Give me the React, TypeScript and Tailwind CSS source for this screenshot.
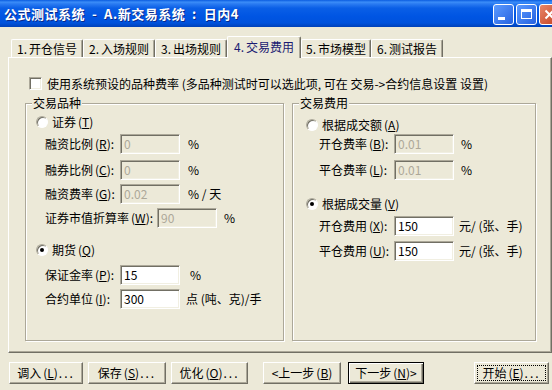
import React from "react";

function U({ c }: { c: string }) {
  return (
    <span className="ml-[2px]">
      (<span className="underline underline-offset-[1px] decoration-1">{c}</span>)
    </span>
  );
}

function Dots() {
  return <span className="tracking-[2px] ml-[1px]">...</span>;
}

function Field({ value, disabled }: { value: string; disabled?: boolean }) {
  return (
    <div
      className={
        "w-[60px] h-[20px] border border-t-[#ACA899] border-l-[#ACA899] border-r-white border-b-white shadow-[inset_1px_1px_0_#716F64,inset_-1px_-1px_0_#F1EFE2] pl-[3px] pt-[1px] text-[12px] leading-[15px] " +
        (disabled ? "bg-[#ECE9D8] text-[#ACA899]" : "bg-white text-black")
      }
    >
      {value}
    </div>
  );
}

function Radio({ checked }: { checked?: boolean }) {
  return (
    <div className="w-[12px] h-[12px] shrink-0 rounded-full border border-t-[#ACA899] border-l-[#ACA899] border-r-white border-b-white bg-white shadow-[inset_1px_1px_0_#716F64] flex items-center justify-center">
      {checked && <div className="w-[4px] h-[4px] rounded-full bg-black" />}
    </div>
  );
}

function Btn({ children, cls, kind }: { children: React.ReactNode; cls: string; kind?: "default" | "focus" }) {
  if (kind === "default") {
    return (
      <div className={"h-[22px] border border-black shadow-[inset_1px_1px_0_#fff,inset_-1px_-1px_0_#716F64,inset_-2px_-2px_0_#ACA899] flex items-center justify-center " + cls}>
        {children}
      </div>
    );
  }
  if (kind === "focus") {
    return (
      <div className={"h-[22px] border border-t-white border-l-white border-r-[#716F64] border-b-[#716F64] shadow-[inset_-1px_-1px_0_#ACA899] p-[2px] " + cls}>
        <div className="w-full h-full border border-dotted border-black flex items-center justify-center">{children}</div>
      </div>
    );
  }
  return (
    <div className={"h-[22px] border border-t-white border-l-white border-r-[#716F64] border-b-[#716F64] shadow-[inset_-1px_-1px_0_#ACA899] flex items-center justify-center " + cls}>
      {children}
    </div>
  );
}

function Tab({ num, label, cls, selected }: { num: string; label: string; cls: string; selected?: boolean }) {
  return (
    <div
      className={
        "border-l border-t border-l-white border-t-white border-r border-r-[#716F64] shadow-[inset_-1px_0_0_#ACA899] rounded-t-[2px] bg-[#ECE9D8] flex items-center justify-center " +
        (selected ? "relative z-10 h-[22px] -mb-px text-[#1B1B72] pb-[2px] " : "h-[18px] text-black ") +
        cls
      }
    >
      <span className="mr-[2px]">{num}.</span>
      {label}
    </div>
  );
}

export default function App() {
  return (
    <div className="w-[552px] h-[390px] overflow-hidden bg-[#ECE9D8] text-[12px] leading-[14px] text-black font-['Noto_Sans_CJK_SC',sans-serif]">
      {/* Title bar */}
      <div className="h-[27px] flex items-center pl-[4px] bg-[linear-gradient(180deg,#0A5CE0_0%,#3B8DF8_8%,#2B7CF2_14%,#0A5FE6_30%,#0055E3_60%,#0052DC_85%,#0041B8_100%)]">
        <div className="text-white font-bold text-[13px] tracking-[0.5px] [text-shadow:1px_1px_0_#0A2A8A] whitespace-pre">
          公式测试系统  -  A.新交易系统  :  日内4
        </div>
        <div className="ml-auto flex gap-[2px] -mr-[8px] mt-[1px]">
          <div className="w-[21px] h-[21px] rounded-[3px] border border-white bg-[linear-gradient(135deg,#5C9BFF,#2662E0)] flex items-end pl-[4px] pb-[4px]">
            <div className="w-[7px] h-[3px] bg-white" />
          </div>
          <div className="w-[21px] h-[21px] rounded-[3px] border border-white bg-[linear-gradient(135deg,#5C9BFF,#2662E0)] flex items-center justify-center">
            <div className="w-[11px] h-[10px] border border-white border-t-[3px]" />
          </div>
          <div className="w-[21px] h-[21px] rounded-[3px] border border-white bg-[linear-gradient(135deg,#E8876A,#C4401F)] flex items-center justify-center">
            <svg width="11" height="11" viewBox="0 0 11 11">
              <path d="M1.5 1.5 L9.5 9.5 M9.5 1.5 L1.5 9.5" stroke="white" strokeWidth="2" />
            </svg>
          </div>
        </div>
      </div>

      {/* Tabs */}
      <div className="h-[30px] flex items-end pl-[11px]">
        <Tab num="1" label="开仓信号" cls="w-[72px]" />
        <Tab num="2" label="入场规则" cls="w-[72px]" />
        <Tab num="3" label="出场规则" cls="w-[72px]" />
        <Tab num="4" label="交易费用" cls="w-[74px]" selected />
        <Tab num="5" label="市场模型" cls="w-[70px]" />
        <Tab num="6" label="测试报告" cls="w-[72px]" />
      </div>

      {/* Panel */}
      <div className="ml-[8px] w-[544px] h-[296px] border-l border-t border-l-white border-t-white border-r border-b border-r-[#716F64] border-b-[#716F64] shadow-[inset_-1px_-1px_0_#ACA899] pl-[16px]">
        <div className="mt-[19px] ml-[4px] h-[13px] flex items-center">
          <div className="w-[13px] h-[13px] bg-white border border-t-[#ACA899] border-l-[#ACA899] border-r-white border-b-white shadow-[inset_1px_1px_0_#716F64,inset_-1px_-1px_0_#F1EFE2]" />
          <div className="ml-[5px] whitespace-pre">使用系统预设的品种费率 (多品种测试时可以选此项, 可在 交易-&gt;合约信息设置 设置)</div>
        </div>

        <div className="mt-[13px] flex gap-[8px]">
          {/* Left group */}
          <div className="relative w-[259px] h-[238px] border border-[#ACA899] shadow-[inset_1px_1px_0_#fff,1px_1px_0_#fff]">
            <div className="absolute -top-[8px] left-[6px] px-[1px] bg-[#ECE9D8]">交易品种</div>
            <div className="flex flex-col pt-[12px]">
              <div className="h-[12px] pl-[10px] flex items-center gap-[4px]">
                <Radio />
                <span>证券<U c="T" /></span>
              </div>
              <div className="mt-[6px] h-[20px] pl-[19px] flex items-center">
                <span className="w-[75px]">融资比例<U c="R" />:</span>
                <Field value="0" disabled />
                <span className="ml-[8px]">%</span>
              </div>
              <div className="mt-[6px] h-[20px] pl-[19px] flex items-center">
                <span className="w-[75px]">融券比例<U c="C" />:</span>
                <Field value="0" disabled />
                <span className="ml-[8px]">%</span>
              </div>
              <div className="mt-[4px] h-[20px] pl-[19px] flex items-center">
                <span className="w-[75px]">融资费率<U c="G" />:</span>
                <Field value="0.02" disabled />
                <span className="ml-[8px] whitespace-pre">% / 天</span>
              </div>
              <div className="mt-[4px] h-[20px] pl-[19px] flex items-center">
                <span className="w-[112px]">证券市值折算率<U c="W" />:</span>
                <Field value="90" disabled />
                <span className="ml-[7px]">%</span>
              </div>
              <div className="mt-[16px] h-[12px] pl-[10px] flex items-center gap-[4px]">
                <Radio checked />
                <span>期货<U c="Q" /></span>
              </div>
              <div className="mt-[9px] h-[20px] pl-[19px] flex items-center">
                <span className="w-[75px]">保证金率<U c="P" />:</span>
                <Field value="15" />
                <span className="ml-[10px]">%</span>
              </div>
              <div className="mt-[4px] h-[20px] pl-[19px] flex items-center">
                <span className="w-[75px]">合约单位<U c="I" />:</span>
                <Field value="300" />
                <span className="ml-[6px]">点 (吨、克)/手</span>
              </div>
            </div>
          </div>

          {/* Right group */}
          <div className="relative w-[244px] h-[238px] border border-[#ACA899] shadow-[inset_1px_1px_0_#fff,1px_1px_0_#fff]">
            <div className="absolute -top-[8px] left-[6px] px-[1px] bg-[#ECE9D8]">交易费用</div>
            <div className="flex flex-col pt-[15px]">
              <div className="h-[12px] pl-[13px] flex items-center gap-[4px]">
                <Radio />
                <span>根据成交额<U c="A" /></span>
              </div>
              <div className="mt-[3px] h-[20px] pl-[26px] flex items-center">
                <span className="w-[75px]">开仓费率<U c="B" />:</span>
                <Field value="0.01" disabled />
                <span className="ml-[7px]">%</span>
              </div>
              <div className="mt-[6px] h-[20px] pl-[26px] flex items-center">
                <span className="w-[75px]">平仓费率<U c="L" />:</span>
                <Field value="0.01" disabled />
                <span className="ml-[7px]">%</span>
              </div>
              <div className="mt-[18px] h-[12px] pl-[13px] flex items-center gap-[4px]">
                <Radio checked />
                <span>根据成交量<U c="V" /></span>
              </div>
              <div className="mt-[6px] h-[20px] pl-[26px] flex items-center">
                <span className="w-[75px]">开仓费用<U c="X" />:</span>
                <Field value="150" />
                <span className="ml-[5px]">元/ (张、手)</span>
              </div>
              <div className="mt-[5px] h-[20px] pl-[26px] flex items-center">
                <span className="w-[75px]">平仓费用<U c="U" />:</span>
                <Field value="150" />
                <span className="ml-[5px]">元/ (张、手)</span>
              </div>
            </div>
          </div>
        </div>
      </div>

      {/* Buttons */}
      <div className="mt-[9px] pl-[9px] flex">
        <Btn cls="w-[74px]">调入<U c="L" /><Dots /></Btn>
        <Btn cls="ml-[5px] w-[78px]">保存<U c="S" /><Dots /></Btn>
        <Btn cls="ml-[5px] w-[77px]">优化<U c="O" /><Dots /></Btn>
        <Btn cls="ml-[15px] w-[78px]">&lt;上一步<U c="B" /></Btn>
        <Btn cls="ml-[7px] w-[76px]" kind="default">下一步<U c="N" />&gt;</Btn>
        <Btn cls="ml-[50px] w-[75px]" kind="focus">开始<U c="E" /><Dots /></Btn>
      </div>
    </div>
  );
}
